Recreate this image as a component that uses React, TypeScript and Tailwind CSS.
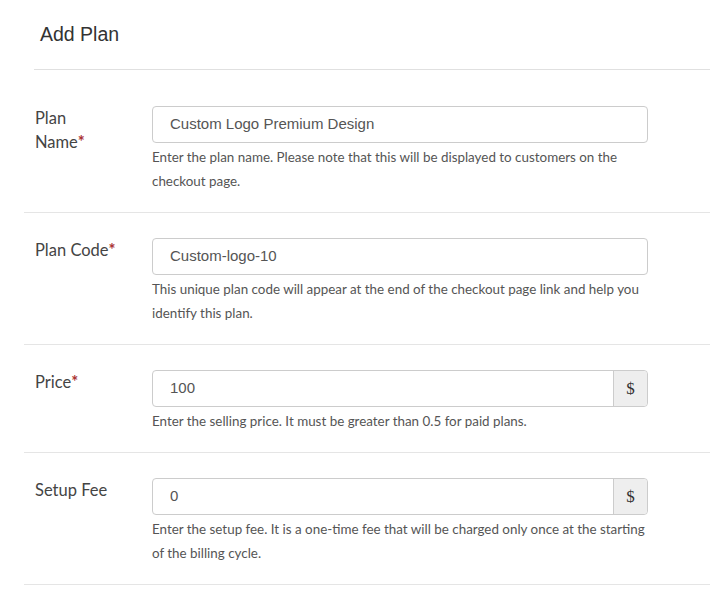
import React from 'react';

type Row = {
  label: React.ReactNode;
  required?: boolean;
  value: string;
  addon?: string;
  help: React.ReactNode;
};

const rows: Row[] = [
  {
    label: (
      <>
        Plan
        <br />
        Name
      </>
    ),
    required: true,
    value: 'Custom Logo Premium Design',
    help: (
      <>
        Enter the plan name. Please note that this will be displayed to customers on the
        <br />
        checkout page.
      </>
    ),
  },
  {
    label: 'Plan Code',
    required: true,
    value: 'Custom-logo-10',
    help: (
      <>
        This unique plan code will appear at the end of the checkout page link and help you
        <br />
        identify this plan.
      </>
    ),
  },
  {
    label: 'Price',
    required: true,
    value: '100',
    addon: '$',
    help: <>Enter the selling price. It must be greater than 0.5 for paid plans.</>,
  },
  {
    label: 'Setup Fee',
    value: '0',
    addon: '$',
    help: (
      <>
        Enter the setup fee. It is a one-time fee that will be charged only once at the starting
        <br />
        of the billing cycle.
      </>
    ),
  },
];

const FormRow: React.FC<{ row: Row; first?: boolean }> = ({ row, first }) => (
  <div className={`flex border-b border-[#e5e5e5] pb-[19px] ${first ? 'pt-[36px]' : 'pt-[25px]'}`}>
    <label className="w-[128px] shrink-0 pl-[11px] font-['Lato',sans-serif] text-[16.5px] leading-[24px] text-[#444]">
      {row.label}
      {row.required && <span className="font-bold text-[#a33]">*</span>}
    </label>
    <div className="w-[496px]">
      <div className="flex h-[37px] rounded-[4px] border border-[#ccc]">
        <input
          readOnly
          value={row.value}
          className="min-w-0 flex-1 bg-transparent pl-[17px] font-['Liberation_Sans',Arial,sans-serif] text-[15px] text-[#555] outline-none"
        />
        {row.addon && (
          <span className="flex w-[34px] items-center justify-center rounded-r-[4px] border-l border-[#ccc] bg-[#eee] font-['Liberation_Serif',serif] text-[17px] text-[#333]">
            {row.addon}
          </span>
        )}
      </div>
      <p className="mt-[2px] whitespace-nowrap font-['Lato',sans-serif] text-[13.4px] leading-[24px] text-[#555]">
        {row.help}
      </p>
    </div>
  </div>
);

export default function App() {
  return (
    <div className="h-[596px] w-[726px] overflow-hidden bg-white">
      <div className="mx-[34px] mr-[16px] border-b border-[#e0e0e0] pb-[21px] pt-[20px]">
        <h1 className="pl-[6px] font-['Liberation_Sans',Arial,sans-serif] text-[19.5px] leading-[28px] text-[#333]">
          Add Plan
        </h1>
      </div>
      <div className="ml-[24px] w-[686px]">
        {rows.map((row, i) => (
          <FormRow key={i} row={row} first={i === 0} />
        ))}
      </div>
    </div>
  );
}
